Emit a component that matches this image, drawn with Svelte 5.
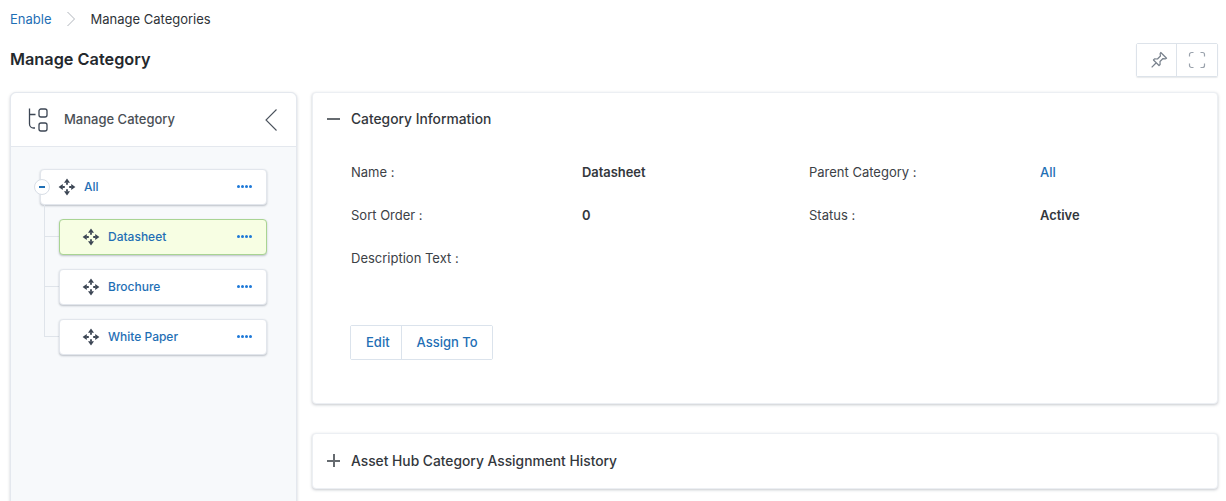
<script>
  const children = [
    { name: 'Datasheet', active: true },
    { name: 'Brochure', active: false },
    { name: 'White Paper', active: false }
  ];
</script>

{#snippet moveIcon()}
  <svg class="move" width="18" height="18" viewBox="0 0 18 18" aria-hidden="true">
    <path d="M9 0.600 L12 4.800 H6 Z M9 17.400 L12 13.200 H6 Z M0.600 9 L4.800 6 V12 Z M17.400 9 L13.200 6 V12 Z" fill="#3c4654" />
    <path d="M9 4.500 V6.800 M9 11.200 V13.500 M4.500 9 H6.800 M11.200 9 H13.500" stroke="#3c4654" stroke-width="1.800" />
  </svg>
{/snippet}

{#snippet dots()}
  <span class="dots"><i></i><i></i><i></i><i></i></span>
{/snippet}

<div class="page">
  <nav class="crumbs">
    <a href="#enable">Enable</a>
    <svg width="10" height="16" viewBox="0 0 10 16" aria-hidden="true">
      <path d="M1.500 1 L8.500 8 L1.500 15" fill="none" stroke="#b0b5bc" stroke-width="1" />
    </svg>
    <span>Manage Categories</span>
  </nav>

  <header class="title-row">
    <h1>Manage Category</h1>
    <div class="tools">
      <button class="pin" aria-label="Pin">
        <svg width="20" height="20" viewBox="0 0 18 18" aria-hidden="true">
          <path d="M10.600 2.200 L15.800 7.400 L14.600 8 L12.600 7.700 L9.900 10.400 L10 13 L9 14 L4 9 L5 8 L7.600 8.100 L10.300 5.400 L10 3.400 Z M6.300 11.700 L2.400 15.600" fill="none" stroke="#78818c" stroke-width="1.100" stroke-linejoin="round" />
        </svg>
      </button>
      <button class="full" aria-label="Fullscreen">
        <svg width="18" height="18" viewBox="0 0 18 18" aria-hidden="true">
          <path d="M1.500 5.500 V3.500 A2 2 0 0 1 3.500 1.500 H5.500 M12.500 1.500 H14.500 A2 2 0 0 1 16.500 3.500 V5.500 M16.500 12.500 V14.500 A2 2 0 0 1 14.500 16.500 H12.500 M5.500 16.500 H3.500 A2 2 0 0 1 1.500 14.500 V12.500" fill="none" stroke="#9aa2ac" stroke-width="1.200" />
        </svg>
      </button>
    </div>
  </header>

  <div class="columns">
    <aside class="tree-panel">
      <div class="tree-head">
        <svg class="tree-logo" width="20" height="24" viewBox="0 0 20 24" aria-hidden="true">
          <path d="M1.500 0.500 V16 A4 4 0 0 0 5.500 20 H7 M1.500 6.500 H7.500" fill="none" stroke="#3c4654" stroke-width="1.300" />
          <rect x="11" y="1" width="8" height="8" rx="2" fill="none" stroke="#3c4654" stroke-width="1.300" />
          <rect x="11" y="15" width="8" height="8" rx="2" fill="none" stroke="#3c4654" stroke-width="1.300" />
        </svg>
        <span class="tree-title">Manage Category</span>
        <svg class="collapse" width="12" height="22" viewBox="0 0 12 22" aria-hidden="true">
          <path d="M11.500 0.500 L1 11 L11.500 21.500" fill="none" stroke="#4a525c" stroke-width="1.100" />
        </svg>
      </div>
      <div class="tree-body">
        <div class="node root">
          <span class="toggle"><b></b></span>
          {@render moveIcon()}
          <a href="#all">All</a>
          {@render dots()}
        </div>
        <ul class="kids">
          {#each children as child}
            <li>
              <div class="node" class:active={child.active}>
                {@render moveIcon()}
                <a href="#{child.name}">{child.name}</a>
                {@render dots()}
              </div>
            </li>
          {/each}
        </ul>
      </div>
    </aside>

    <main class="cards">
      <section class="card info">
        <div class="card-head">
          <span class="sign minus"></span>
          <h2>Category Information</h2>
        </div>
        <dl class="fields">
          <dt>Name :</dt>
          <dd class="strong">Datasheet</dd>
          <dt>Parent Category :</dt>
          <dd class="link"><a href="#all">All</a></dd>
          <dt>Sort Order :</dt>
          <dd class="strong">0</dd>
          <dt>Status :</dt>
          <dd class="strong">Active</dd>
          <dt>Description Text :</dt>
          <dd></dd>
        </dl>
        <div class="actions">
          <button class="edit">Edit</button>
          <button class="assign">Assign To</button>
        </div>
      </section>

      <section class="card history">
        <div class="card-head">
          <span class="sign plus"></span>
          <h2>Asset Hub Category Assignment History</h2>
        </div>
      </section>
    </main>
  </div>
</div>

<style>
  :global(body) {
    background: #fff;
    overflow: hidden;
  }

  .page {
    height: 501px;
    overflow: hidden;
    box-sizing: border-box;
    padding: 10px 8px 0 10px;
    font-family: Inter, "Liberation Sans", sans-serif;
    font-size: 13px;
    color: #2e3338;
  }

  a {
    color: #1f6fb5;
    text-decoration: none;
  }

  .crumbs {
    display: flex;
    align-items: center;
    height: 18px;
    gap: 14.500px;
  }

  .title-row {
    display: flex;
    justify-content: space-between;
    align-items: flex-start;
    margin-top: 15px;
    height: 49px;
  }

  h1 {
    margin: 0;
    padding-top: 6px;
    font-size: 16.300px;
    line-height: 20px;
    font-weight: 600;
    color: #24282d;
  }

  .tools {
    display: flex;
    border: 1px solid #dde3ea;
    border-radius: 2px;
    height: 32px;
    box-shadow: 0 1px 1px rgba(60, 70, 90, 0.12);
  }

  .tools button {
    padding: 0;
    border: 0;
    background: #fff;
    display: flex;
    align-items: center;
    justify-content: center;
  }

  .tools .pin {
    width: 39px;
    padding-left: 5px;
  }

  .tools .full {
    width: 41px;
    border-left: 1px solid #dde3ea;
  }

  .columns {
    display: flex;
    gap: 15px;
    align-items: flex-start;
  }

  .tree-panel {
    width: 287px;
    flex: none;
    height: 440px;
    box-sizing: border-box;
    background: #f7f9fb;
    border: 1px solid #e4e8ee;
    border-radius: 6px;
    box-shadow: 0 1px 3px rgba(50, 60, 80, 0.25);
  }

  .tree-head {
    display: flex;
    align-items: center;
    height: 53px;
    padding: 0 19px 0 17px;
    background: #fff;
    border-bottom: 1px solid #e4e8ee;
    border-radius: 6px 6px 0 0;
  }

  .tree-title {
    margin-left: 16px;
    padding-bottom: 2px;
    font-weight: 500;
    color: #4a4f55;
    flex: 1;
  }

  .tree-body {
    padding: 22px 29px 0 29px;
  }

  .node {
    position: relative;
    display: flex;
    align-items: center;
    height: 36px;
    box-sizing: border-box;
    background: #fff;
    border: 1px solid #e2e6ec;
    border-radius: 4px;
    box-shadow: 0 1px 2px rgba(50, 60, 80, 0.3);
    padding: 0 14px 1px 22px;
    font-weight: 500;
    font-size: 12px;
  }

  .node.root {
    padding-left: 17px;
  }

  .node a {
    margin-left: 8px;
    flex: 1;
  }

  .node.active {
    background: #f7fee3;
    border-color: #a9d493;
  }

  .toggle {
    position: absolute;
    left: -7px;
    top: 9px;
    width: 16px;
    height: 16px;
    box-sizing: border-box;
    background: #fff;
    border: 1px solid #d8dee6;
    border-radius: 50%;
    display: flex;
    align-items: center;
    justify-content: center;
  }

  .toggle b {
    width: 6px;
    height: 2px;
    background: #1f6fb5;
  }

  .dots {
    display: flex;
    gap: 1px;
  }

  .dots i {
    width: 3px;
    height: 3px;
    border-radius: 50%;
    background: #1c78d8;
  }

  .kids {
    list-style: none;
    margin: 0 0 0 4px;
    padding: 0;
    position: relative;
  }

  .kids li {
    position: relative;
    padding: 14px 0 0 15px;
  }

  /* tree connector lines */
  .kids li::before {
    content: "";
    position: absolute;
    left: 0;
    top: 0;
    width: 15px;
    height: 31px;
    border-left: 1px solid #dfe4ea;
    border-bottom: 1px solid #dfe4ea;
  }

  .kids li:not(:last-child)::after {
    content: "";
    position: absolute;
    left: 0;
    top: 31px;
    bottom: 0;
    border-left: 1px solid #dfe4ea;
  }

  .cards {
    flex: 1;
    display: flex;
    flex-direction: column;
    gap: 29px;
  }

  .card {
    background: #fff;
    border: 1px solid #eceff3;
    border-radius: 4px;
    box-shadow: 0 1px 3px rgba(50, 60, 80, 0.28);
  }

  .info {
    height: 312px;
    box-sizing: border-box;
  }

  .history {
    height: 56px;
    box-sizing: border-box;
  }

  .card-head {
    display: flex;
    align-items: center;
    height: 52px;
    padding-left: 14px;
  }

  .history .card-head {
    height: 53px;
  }

  h2 {
    margin: 0 0 0 11px;
    font-size: 13.800px;
    font-weight: 500;
    color: #33373c;
  }

  .sign {
    position: relative;
    width: 13px;
    height: 13px;
  }

  .sign::before {
    content: "";
    position: absolute;
    left: 0;
    right: 0;
    top: 5.500px;
    height: 2px;
    background: #666b70;
  }

  .plus::after {
    content: "";
    position: absolute;
    top: 0;
    bottom: 0;
    left: 5.500px;
    width: 2px;
    background: #666b70;
  }

  .fields {
    display: grid;
    grid-template-columns: 231px 227px 231px 1fr;
    grid-auto-rows: 43px;
    margin: 5px 0 0;
    padding: 0 0 0 38px;
    align-items: center;
    height: 129px;
    line-height: 16px;
  }

  dt {
    color: #3c4146;
  }

  dd {
    margin: 0;
  }

  dd.strong {
    padding-top: 2px;
    font-size: 12.900px;
    font-weight: 600;
    color: #33373c;
  }

  dd.link {
    font-weight: 500;
  }

  .actions {
    display: inline-flex;
    margin: 46px 0 0 37px;
    border: 1px solid #dbe3ec;
    border-radius: 2px;
    height: 35px;
    box-sizing: border-box;
  }

  .actions button {
    font: inherit;
    font-weight: 500;
    color: #1f6fb5;
    background: #fff;
    border: 0;
    padding-bottom: 2px;
  }

  .edit {
    padding: 0 11px 0 15px;
  }

  .assign {
    padding: 0 14px 0 15px;
    border-left: 1px solid #dbe3ec !important;
  }
</style>
